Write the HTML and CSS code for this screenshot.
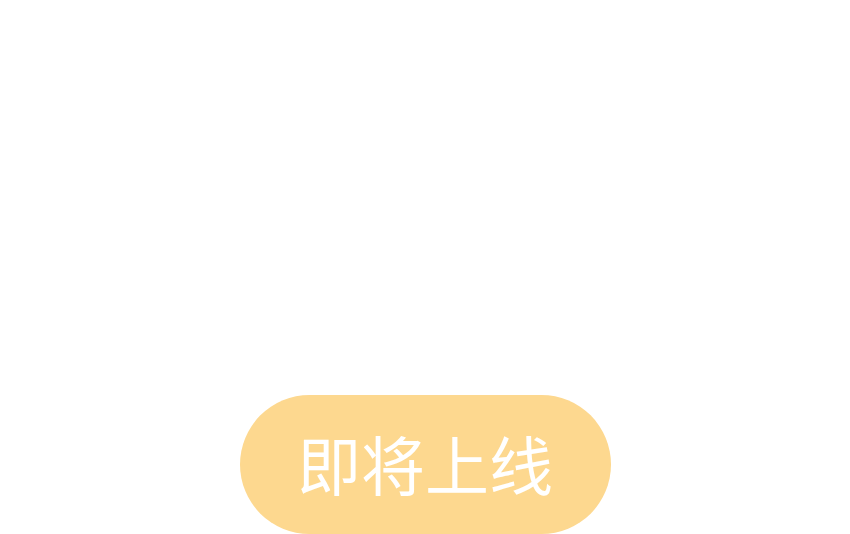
FILE: index.html
```html
<!DOCTYPE html>
<html lang="zh">
<head>
<meta charset="utf-8">
<link rel="stylesheet" href="styles.css">
</head>
<body>
<main class="page">
  <button class="soon">即将上线</button>
</main>
</body>
</html>
```
FILE: styles.css
```css
html, body {
  margin: 0;
  padding: 0;
  background: #ffffff;
  overflow: hidden;
}
.page {
  width: 850px;
  height: 534px;
  display: flex;
  flex-direction: column;
  align-items: center;
  padding-top: 395px;
  box-sizing: border-box;
}
.soon {
  width: 371px;
  height: 139px;
  flex: none;
  border: none;
  border-radius: 70px;
  background: #fdd88f;
  color: #ffffff;
  font-family: "Noto Sans CJK SC", sans-serif;
  font-size: 64px;
  line-height: 1;
  padding: 0 0 6px 0;
  box-sizing: border-box;
  display: flex;
  align-items: center;
  justify-content: center;
}
```
